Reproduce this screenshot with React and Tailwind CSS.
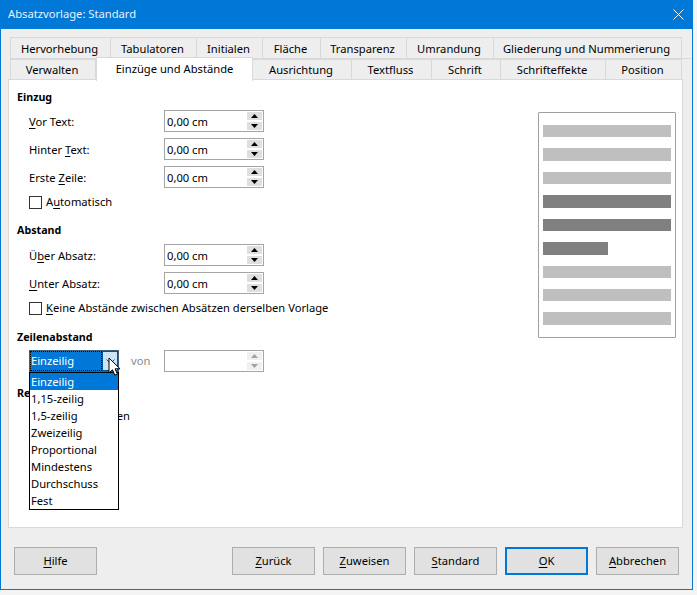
import React from 'react';

const FONT = 'font-["Noto_Sans","Open_Sans",sans-serif]';

const topTabs = [
  { label: 'Hervorhebung', width: 'w-[101px]' },
  { label: 'Tabulatoren', width: 'w-[86px]' },
  { label: 'Initialen', width: 'w-[66px]' },
  { label: 'Fläche', width: 'w-[58px]' },
  { label: 'Transparenz', width: 'w-[86px]' },
  { label: 'Umrandung', width: 'w-[87px]' },
  { label: 'Gliederung und Nummerierung', width: 'w-[188px]' },
];

const bottomTabs = [
  { label: 'Verwalten', width: 'w-[86px]' },
  { label: 'Einzüge und Abstände', width: 'w-[157px]', active: true },
  { label: 'Ausrichtung', width: 'w-[99px]' },
  { label: 'Textfluss', width: 'w-[80px]' },
  { label: 'Schrift', width: 'w-[69px]' },
  { label: 'Schrifteffekte', width: 'w-[105px]' },
  { label: 'Position', width: 'w-[76px]' },
];

const previewLines = [
  'h-[12px] w-full bg-[#bfbfbf]',
  'h-[13px] w-full bg-[#bfbfbf]',
  'h-[12px] w-full bg-[#bfbfbf]',
  'h-[13px] w-full bg-[#808080]',
  'h-[12px] w-full bg-[#808080]',
  'h-[13px] w-[65px] bg-[#808080]',
  'h-[12px] w-full bg-[#bfbfbf]',
  'h-[12px] w-full bg-[#bfbfbf]',
  'h-[13px] w-full bg-[#bfbfbf]',
];

const lineOptions = ['Einzeilig', '1,15-zeilig', '1,5-zeilig', 'Zweizeilig', 'Proportional', 'Mindestens', 'Durchschuss', 'Fest'];

function Key({ children }) {
  return <span className="underline underline-offset-2">{children}</span>;
}

function Tab({ tab }) {
  if (tab.active) {
    return (
      <div className={`${tab.width} relative z-10 -mt-[2px] -mb-px flex h-[24px] items-center justify-center border-x border-t border-[#d9d9d9] bg-white text-[11.2px] text-black`}>
        {tab.label}
      </div>
    );
  }
  return (
    <div className={`${tab.width} flex h-full items-center justify-center border-t border-r border-[#d9d9d9] pt-[2px] pr-[2px] first:border-l text-[11.2px] text-black`}>
      {tab.label}
    </div>
  );
}

function Spin({ value, disabled }) {
  const arrow = disabled ? '#a0a0a0' : '#000000';
  const bg = disabled ? 'bg-[#f0f0f0]' : 'bg-[#dfdfdf]';
  return (
    <div className="flex h-[22px] w-[100px] items-center justify-between border border-[#a5a5a5] bg-white pr-[1px] pl-[2px]">
      <span className="pt-[2px] text-[11.2px] text-black">{value}</span>
      <div className="flex h-[18px] w-[15px] flex-col justify-between">
        <div className={`${bg} flex h-[8px] items-center justify-center`}>
          <svg width="7" height="4" viewBox="0 0 7 4"><path d="M3.5 0 7 4H0z" fill={arrow} /></svg>
        </div>
        <div className={`${bg} flex h-[8px] items-center justify-center`}>
          <svg width="7" height="4" viewBox="0 0 7 4"><path d="M0 0h7L3.5 4z" fill={arrow} /></svg>
        </div>
      </div>
    </div>
  );
}

function SpinRow({ label }) {
  return (
    <div className="flex h-[22px] items-center">
      <div className="w-[135px] pt-[2px] text-[11.2px] text-black">{label}</div>
      <Spin value="0,00 cm" />
    </div>
  );
}

function Check({ label, className }) {
  return (
    <div className={`flex h-[14px] items-center gap-[4px] ${className}`}>
      <div className="h-[13px] w-[13px] border border-[#333333] bg-white" />
      <span className="whitespace-nowrap pt-px text-[11.2px] text-black">{label}</span>
    </div>
  );
}

function Heading({ children, className }) {
  return <div className={`h-[16px] text-[10.7px] leading-[16px] font-bold text-black ${className}`}>{children}</div>;
}

function LineCombo() {
  return (
    <div className="relative flex h-[22px] w-[90px] border border-[#3f5f80] bg-white">
      <div className="flex h-full w-[72px] items-center bg-[#0078d7] pt-px pl-px text-[11.2px] text-white outline-1 outline-dotted outline-[#0a0a0a] -outline-offset-1">
        Einzeilig
      </div>
      <div className="flex h-full flex-1 items-center justify-center border border-[#005499] bg-[#cce4f7]">
        <svg width="9" height="5" viewBox="0 0 9 5" fill="none"><path d="M.5.5l4 4 4-4" stroke="#404040" /></svg>
      </div>
      <div className="absolute top-[21px] -left-px z-20 w-[90px] border border-black bg-white">
        {lineOptions.map((item, i) => (
          <div key={item} className={`flex h-[17px] items-center pt-px pl-px text-[11.2px] ${i === 0 ? 'bg-[#0078d7] text-white' : 'text-black'}`}>
            {item}
          </div>
        ))}
      </div>
      <svg className="absolute top-[6px] left-[78px] z-30" width="13" height="20" viewBox="0 0 13 20">
        <path d="M1 1v15l3.5-3.2 2.3 5.4 2.6-1.1-2.3-5.3H12z" fill="#ffffff" stroke="#000000" strokeWidth="1" />
      </svg>
    </div>
  );
}

function FooterButton({ children, primary, className }) {
  return (
    <div className={`flex h-[28px] w-[83px] items-center justify-center bg-[#e1e1e1] pt-px text-[11.2px] text-black ${primary ? 'border-2 border-[#0078d7]' : 'border border-[#adadad]'} ${className || ''}`}>
      {children}
    </div>
  );
}

export default function App() {
  return (
    <div className={`h-[595px] w-[697px] overflow-hidden bg-[#f4f4f4] ${FONT}`}>
      <div className="flex h-[590px] w-[693px] flex-col border-x border-b border-[#0078d7] bg-[#eeeeee]">
        {/* Title bar */}
        <div className="-mx-px flex h-[29px] shrink-0 items-center justify-between bg-[#0078d7] pr-[9px] pl-[8px]">
          <span className="text-[11.2px] text-[#e6f1fb]">Absatzvorlage: Standard</span>
          <svg width="11" height="11" viewBox="0 0 11 11" stroke="#ffffff" strokeWidth="1"><path d="M.5.5l10 10M10.5.5l-10 10" /></svg>
        </div>

        {/* Tabs */}
        <div className="mt-[8px] ml-[9px] flex h-[21px] shrink-0">
          {topTabs.map((tab) => <Tab key={tab.label} tab={tab} />)}
        </div>
        <div className="ml-[9px] flex h-[21px] shrink-0 items-start border-t border-[#d9d9d9]">
          {bottomTabs.map((tab) => <Tab key={tab.label} tab={tab} />)}
        </div>

        {/* Panel */}
        <div className="ml-[7px] flex h-[449px] w-[675px] shrink-0 justify-between border border-[#d9d9d9] bg-white pt-[9px] pr-[6px] pl-[8px]">
          <div className="flex w-[400px] flex-col">
            <Heading>Einzug</Heading>
            <div className="mt-[5px] ml-[12px] flex flex-col gap-[6px]">
              <SpinRow label={<><Key>V</Key>or Text:</>} />
              <SpinRow label={<>Hinter <Key>T</Key>ext:</>} />
              <SpinRow label={<>Erste <Key>Z</Key>eile:</>} />
            </div>
            <Check className="mt-[7px] ml-[12px]" label={<>A<Key>u</Key>tomatisch</>} />

            <Heading className="mt-[13px]">Abstand</Heading>
            <div className="mt-[6px] ml-[12px] flex flex-col gap-[6px]">
              <SpinRow label={<>Ü<Key>b</Key>er Absatz:</>} />
              <SpinRow label={<><Key>U</Key>nter Absatz:</>} />
            </div>
            <Check className="mt-[7px] ml-[12px]" label={<><Key>K</Key>eine Abstände zwischen Absätzen derselben Vorlage</>} />

            <Heading className="mt-[14px]">Zeilenabstand</Heading>
            <div className="mt-[5px] ml-[12px] flex h-[22px] items-center">
              <LineCombo />
              <span className="ml-[12px] w-[33px] pt-px text-[11.2px] text-[#8a8a8a]">von</span>
              <Spin disabled value="" />
            </div>

            <Heading className="mt-[13px]">Registerhaltigkeit</Heading>
            <Check className="mt-[8px] ml-[12px]" label="Berücksichtigen" />
          </div>

          {/* Preview */}
          <div className="mt-[23px] flex h-[226px] w-[138px] flex-col gap-[11px] rounded-[1px] border border-[#a0a0a0] bg-white px-[4px] pt-[12px]">
            {previewLines.map((cls, i) => <div key={i} className={cls} />)}
          </div>
        </div>

        {/* Footer */}
        <div className="mt-[19px] flex items-start pl-[13px]">
          <FooterButton><Key>H</Key>ilfe</FooterButton>
          <FooterButton className="ml-[135px]"><Key>Z</Key>urück</FooterButton>
          <FooterButton className="ml-[8px]"><Key>Z</Key>uweisen</FooterButton>
          <FooterButton className="ml-[8px]"><Key>S</Key>tandard</FooterButton>
          <FooterButton primary className="ml-[8px]"><Key>O</Key>K</FooterButton>
          <FooterButton className="ml-[8px]"><Key>A</Key>bbrechen</FooterButton>
        </div>
      </div>
    </div>
  );
}
